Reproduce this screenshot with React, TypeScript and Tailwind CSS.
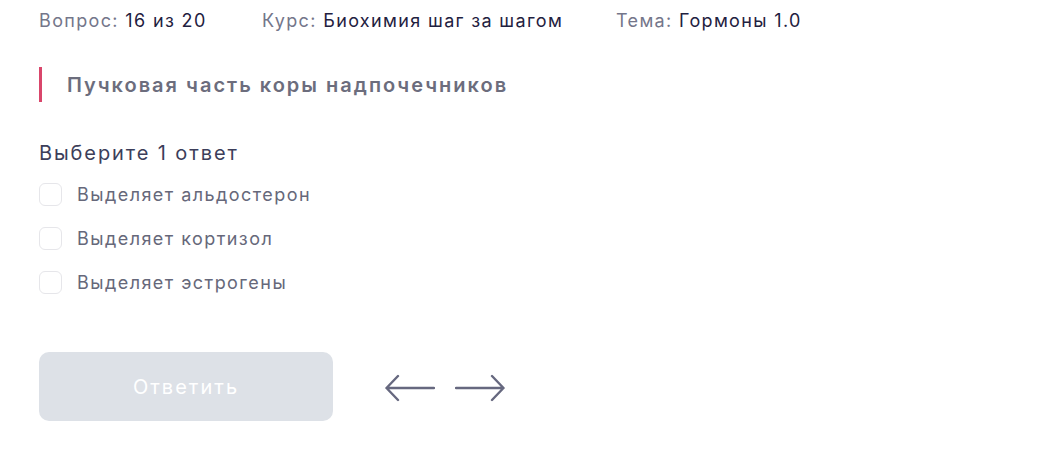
import { useState } from "react";

const options = ["Выделяет альдостерон", "Выделяет кортизол", "Выделяет эстрогены"];

function Arrow({ dir }: { dir: "left" | "right" }) {
  return (
    <svg width="50" height="28" viewBox="0 0 50 28" fill="none" className="text-[#66687f]">
      {dir === "left" ? (
        <path d="M13 2 L1.5 14 L13 26 M1.5 14 H49" stroke="currentColor" strokeWidth="2.4" strokeLinecap="round" strokeLinejoin="round" />
      ) : (
        <path d="M37 2 L48.5 14 L37 26 M48.5 14 H1" stroke="currentColor" strokeWidth="2.4" strokeLinecap="round" strokeLinejoin="round" />
      )}
    </svg>
  );
}

export default function App() {
  const [picked, setPicked] = useState<number | null>(null);

  return (
    <div className="min-h-[451px] bg-white pl-[39px] pt-[9px] font-['Inter',sans-serif]">
      <div className="flex text-[18px] leading-[24px] tracking-[1.35px]">
        <div className="w-[223px]">
          <span className="text-[#74768a]">Вопрос: </span>
          <span className="text-[#1f2140]">16 из 20</span>
        </div>
        <div className="w-[354px]">
          <span className="text-[#74768a]">Курс: </span>
          <span className="text-[#1f2140]">Биохимия шаг за шагом</span>
        </div>
        <div>
          <span className="text-[#74768a]">Тема: </span>
          <span className="text-[#1f2140]">Гормоны 1.0</span>
        </div>
      </div>

      <div className="mt-[34px] flex h-[35px] items-center border-l-[3px] border-[#d9466b] pl-[25px]">
        <h2 className="text-[20px] font-semibold tracking-[2px] text-[#6c6d7d]">Пучковая часть коры надпочечников</h2>
      </div>

      <p className="mt-[37px] text-[20px] leading-[28px] tracking-[1.9px] text-[#3c3e5a]">Выберите 1 ответ</p>

      <div className="mt-[16px] flex flex-col gap-[21px]">
        {options.map((o, i) => (
          <label key={o} className="flex cursor-pointer items-center gap-[15px]" onClick={() => setPicked(i)}>
            <span
              className={
                picked === i
                  ? "h-[23px] w-[23px] rounded-[6px] border-[1.5px] border-[#d9466b] bg-[#d9466b]"
                  : "h-[23px] w-[23px] rounded-[6px] border-[1.5px] border-[#e6e6ea] bg-white"
              }
            />
            <span className="text-[18px] leading-[23px] tracking-[1.45px] text-[#66687a]">{o}</span>
          </label>
        ))}
      </div>

      <div className="mt-[58px] flex items-center gap-[52px]">
        <button className="h-[69px] w-[294px] rounded-[10px] bg-[#dde1e7] text-[20px] tracking-[2px] text-white">Ответить</button>
        <div className="flex items-center gap-[20px] pt-[2px]">
          <Arrow dir="left" />
          <Arrow dir="right" />
        </div>
      </div>
    </div>
  );
}
